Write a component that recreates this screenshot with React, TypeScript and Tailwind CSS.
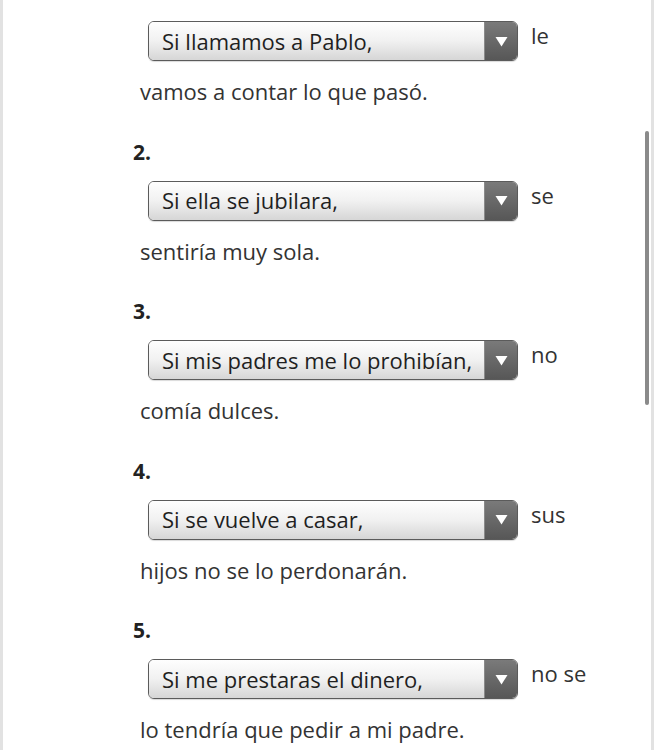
import type { ReactNode } from "react";

type Item = {
	num: string;
	choice: string;
	tail: string;
	rest: string;
};

const items: Item[] = [
	{ num: "1.", choice: "Si llamamos a Pablo,", tail: "le", rest: "vamos a contar lo que pasó." },
	{ num: "2.", choice: "Si ella se jubilara,", tail: "se", rest: "sentiría muy sola." },
	{ num: "3.", choice: "Si mis padres me lo prohibían,", tail: "no", rest: "comía dulces." },
	{ num: "4.", choice: "Si se vuelve a casar,", tail: "sus", rest: "hijos no se lo perdonarán." },
	{ num: "5.", choice: "Si me prestaras el dinero,", tail: "no se", rest: "lo tendría que pedir a mi padre." },
];

const Select = ({ children }: { children: ReactNode }) => (
	<div className="flex h-[40px] w-[370px] shrink-0 overflow-hidden rounded-[6px] border border-[#5b5b5b] shadow-[0_1px_1px_rgba(0,0,0,0.15)]">
		<div className="flex flex-1 items-center overflow-hidden bg-linear-to-b from-[#fefefe] via-[#f1f1f1] to-[#d6d6d6] pl-[13px] text-[22px] whitespace-nowrap text-[#1f1f1f]">
			{children}
		</div>
		<div className="flex w-[33px] shrink-0 items-center justify-center border-l border-[#8a8a8a] bg-linear-to-b from-[#7a7a7a] to-[#575757]">
			<svg width="13" height="11" viewBox="0 0 13 11">
				<path d="M0.5 1 L12.5 1 L6.5 10.5 Z" fill="#ffffff" />
			</svg>
		</div>
	</div>
);

const Question = ({ item }: { item: Item }) => (
	<div className="flex flex-col">
		<div className="text-[21px] leading-[28px] font-bold text-[#222]">{item.num}</div>
		<div className="mt-[15px] ml-[15px] flex items-start">
			<Select>{item.choice}</Select>
			<span className="ml-[13px] text-[22px] leading-[28px] text-[#333]">{item.tail}</span>
		</div>
		<div className="mt-[16px] ml-[7px] text-[22px] leading-[28px] text-[#333]">{item.rest}</div>
	</div>
);

export default function App() {
	return (
		<div
			className="flex h-[750px] w-[654px] overflow-hidden bg-white"
			style={{ fontFamily: '"Open Sans", "Noto Sans", sans-serif' }}>
			<div className="w-[3px] shrink-0 bg-[#e2e2e2]" />
			<div className="flex-1 pl-[130px]">
				<div className="-mt-[22px] flex flex-col gap-[32.5px]">
					{items.map((item) => (
						<Question
							key={item.num}
							item={item}
						/>
					))}
				</div>
			</div>
			{/* scrollbar */}
			<div className="flex w-[10px] shrink-0">
				<div className="w-[7px] pl-[1px]">
					<div className="mt-[131px] h-[274px] w-[4px] rounded-[2px] bg-[#8a8a8a]" />
				</div>
				<div className="w-[3px] bg-[#e2e2e2]" />
			</div>
		</div>
	);
}
